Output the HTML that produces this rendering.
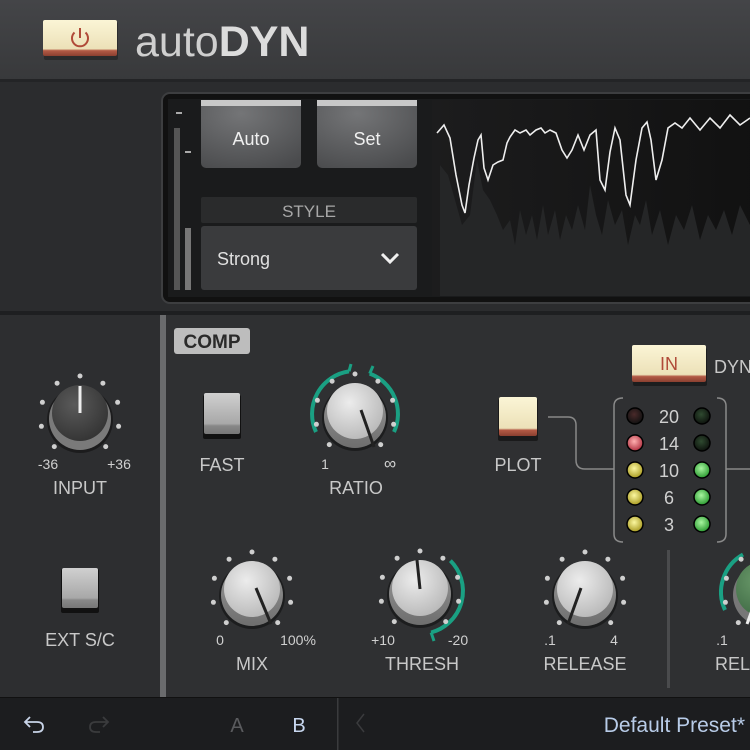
<!DOCTYPE html>
<html><head><meta charset="utf-8"><style>
html,body{margin:0;padding:0;width:750px;height:750px;overflow:hidden;background:#2e2f31}
svg{display:block}
text{font-family:"Liberation Sans",sans-serif}
</style></head><body>
<svg width="750" height="750" viewBox="0 0 750 750" xmlns="http://www.w3.org/2000/svg">
<defs>
<linearGradient id="hdr" x1="0" y1="0" x2="0" y2="1"><stop offset="0" stop-color="#444548"/><stop offset="1" stop-color="#38393b"/></linearGradient>
<linearGradient id="cream" x1="0" y1="0" x2="0" y2="1"><stop offset="0" stop-color="#fbf5d6"/><stop offset="0.8" stop-color="#ece1b8"/><stop offset="0.85" stop-color="#b35a45"/><stop offset="1" stop-color="#8a4030"/></linearGradient>
<radialGradient id="btn" cx="0.4" cy="0.2" r="0.9"><stop offset="0" stop-color="#747577"/><stop offset="1" stop-color="#4a4b4d"/></radialGradient>
<linearGradient id="sq" x1="0" y1="0" x2="0" y2="1"><stop offset="0" stop-color="#d0d0d0"/><stop offset="0.75" stop-color="#a8a8a8"/><stop offset="0.8" stop-color="#888"/><stop offset="1" stop-color="#777"/></linearGradient>
<radialGradient id="cap" cx="0.4" cy="0.35" r="0.7"><stop offset="0" stop-color="#ececec"/><stop offset="1" stop-color="#b8b8b8"/></radialGradient>
<linearGradient id="skirt" x1="0" y1="0" x2="0" y2="1"><stop offset="0" stop-color="#9a9a9a"/><stop offset="1" stop-color="#6e6e6e"/></linearGradient>
<radialGradient id="dcap" cx="0.4" cy="0.35" r="0.7"><stop offset="0" stop-color="#5a5a5a"/><stop offset="1" stop-color="#333"/></radialGradient>
<radialGradient id="gcap" cx="0.4" cy="0.35" r="0.7"><stop offset="0" stop-color="#6a9a6a"/><stop offset="1" stop-color="#3f6a45"/></radialGradient>
<linearGradient id="wavebg" x1="0" y1="0" x2="1" y2="0"><stop offset="0" stop-color="#1c1c1d"/><stop offset="1" stop-color="#111"/></linearGradient>
<g id="dots" fill="#cfcfcf">
<circle cx="-25.7" cy="30.6" r="2.5"/><circle cx="-38.6" cy="10.3" r="2.5"/><circle cx="-37.6" cy="-13.7" r="2.5"/><circle cx="-22.9" cy="-32.8" r="2.5"/><circle cx="0" cy="-40" r="2.5"/><circle cx="22.9" cy="-32.8" r="2.5"/><circle cx="37.6" cy="-13.7" r="2.5"/><circle cx="38.6" cy="10.3" r="2.5"/><circle cx="25.7" cy="30.6" r="2.5"/>
</g>
<g id="knob"><circle cx="0" cy="4" r="33" fill="#111" opacity="0.6"/><circle cx="0" cy="3" r="31" fill="url(#skirt)"/><circle cx="0" cy="-3" r="28" fill="url(#cap)"/></g>
<g id="dknob"><circle cx="0" cy="4" r="33" fill="#111" opacity="0.6"/><circle cx="0" cy="3" r="31" fill="#7a7a7a"/><circle cx="0" cy="-3" r="28" fill="url(#dcap)"/></g>
<radialGradient id="ledY" cx="0.45" cy="0.4" r="0.6"><stop offset="0" stop-color="#fbf7a0"/><stop offset="1" stop-color="#a89a20"/></radialGradient>
<radialGradient id="ledG" cx="0.45" cy="0.4" r="0.6"><stop offset="0" stop-color="#a8f5a0"/><stop offset="1" stop-color="#2a9a30"/></radialGradient>
<radialGradient id="ledR" cx="0.45" cy="0.4" r="0.6"><stop offset="0" stop-color="#ffb0b0"/><stop offset="1" stop-color="#b03040"/></radialGradient>
<radialGradient id="ledOffR" cx="0.45" cy="0.4" r="0.6"><stop offset="0" stop-color="#4a2a2a"/><stop offset="1" stop-color="#111"/></radialGradient>
<radialGradient id="ledOffG" cx="0.45" cy="0.4" r="0.6"><stop offset="0" stop-color="#2f4a30"/><stop offset="1" stop-color="#0d120d"/></radialGradient>
</defs>

<rect x="0" y="0" width="750" height="80" fill="url(#hdr)"/>
<rect x="0" y="79" width="750" height="3" fill="#232426"/>
<rect x="44" y="22" width="74" height="38" rx="2" fill="#1a1a1a" opacity="0.5"/>
<rect x="43" y="20" width="74" height="36" rx="2" fill="url(#cream)"/>
<path d="M74.5 32.5 A8 8 0 1 0 85.5 32.5" fill="none" stroke="#b04a38" stroke-width="2"/>
<line x1="80" y1="28" x2="80" y2="38" stroke="#b04a38" stroke-width="2"/>
<text x="135" y="56" font-size="43" fill="#cfcfcf">auto<tspan font-weight="bold" fill="#dcdcdc">DYN</tspan></text>

<rect x="0" y="82" width="750" height="232" fill="#2b2c2e"/>
<rect x="162" y="93" width="600" height="210" rx="8" fill="#111" stroke="#3d3e40" stroke-width="2"/>
<rect x="168" y="99" width="600" height="198" fill="#1a1b1c"/>
<rect x="176" y="112" width="6" height="2" fill="#aaa"/>
<rect x="185" y="151" width="6" height="2" fill="#aaa"/>
<rect x="174" y="128" width="6" height="162" fill="#555"/>
<rect x="185" y="228" width="6" height="62" fill="#777"/>
<rect x="201" y="100" width="100" height="68" rx="5" fill="url(#btn)"/>
<rect x="201" y="100" width="100" height="6" fill="#c8c8c8"/>
<text x="251" y="145" font-size="18" fill="#f0f0f0" text-anchor="middle">Auto</text>
<rect x="317" y="100" width="100" height="68" rx="5" fill="url(#btn)"/>
<rect x="317" y="100" width="100" height="6" fill="#c8c8c8"/>
<text x="367" y="145" font-size="18" fill="#f0f0f0" text-anchor="middle">Set</text>
<rect x="201" y="197" width="216" height="26" rx="2" fill="#2a2b2c"/>
<text x="309" y="217" font-size="17" fill="#a8a8a8" text-anchor="middle">STYLE</text>
<rect x="201" y="226" width="216" height="64" rx="3" fill="#3a3b3d"/>
<text x="217" y="265" font-size="18" fill="#e0e0e0">Strong</text>
<path d="M382 254 L390 262 L398 254" fill="none" stroke="#f0f0f0" stroke-width="3"/>
<rect x="432" y="100" width="330" height="196" fill="url(#wavebg)"/>
<path d="M440 296 L440 165 L448 175 L455 200 L462 225 L470 215 L477 160 L483 190 L490 200 L497 215 L503 230 L510 220 L515 245 L520 210 L526 235 L532 215 L537 240 L543 205 L548 235 L555 210 L560 240 L566 215 L572 230 L578 205 L585 230 L590 185 L596 215 L602 235 L608 200 L615 225 L622 210 L628 245 L635 215 L640 225 L646 200 L652 235 L660 210 L668 245 L676 215 L684 230 L692 205 L700 240 L708 215 L716 230 L724 210 L732 235 L740 205 L750 225 L760 296 Z" fill="#252627"/>
<polyline points="437,133 444,125 450,138 456,175 462,205 465,213 469,185 474,158 478,140 481,135 484,168 488,180 493,165 498,162 503,160 507,143 510,137 515,130 520,133 526,130 530,135 536,130 541,128 545,133 550,130 556,133 562,150 567,158 572,150 578,135 584,150 590,135 596,130 600,180 605,190 610,152 615,128 620,140 626,195 630,205 636,160 642,128 647,122 651,140 656,180 662,160 668,128 675,123 682,128 690,118 700,130 710,118 720,128 730,115 740,125 750,118" fill="none" stroke="#eee" stroke-width="1.6"/>
<rect x="0" y="311" width="750" height="4" fill="#1e1f21"/>

<rect x="0" y="315" width="160" height="382" fill="#2d2e30"/>
<rect x="160" y="315" width="6" height="382" fill="#6a6b6d"/>
<rect x="166" y="315" width="584" height="382" fill="#2f3032"/>

<rect x="174" y="328" width="76" height="26" rx="3" fill="#bdbdbd"/>
<text x="212" y="348" font-size="19" font-weight="bold" fill="#2a2a2a" text-anchor="middle">COMP</text>

<g transform="translate(80,416)"><use href="#dots"/><use href="#dknob"/><line x1="0" y1="-3" x2="0" y2="-30" stroke="#eee" stroke-width="3"/></g>
<text x="48" y="469" font-size="14" fill="#d0d0d0" text-anchor="middle">-36</text>
<text x="119" y="469" font-size="14" fill="#d0d0d0" text-anchor="middle">+36</text>
<text x="80" y="494" font-size="18" fill="#c8c8c8" text-anchor="middle">INPUT</text>

<rect x="61" y="569" width="38" height="44" rx="2" fill="#111"/>
<rect x="62" y="568" width="36" height="40" rx="2" fill="url(#sq)"/>
<text x="80" y="646" font-size="18" fill="#c8c8c8" text-anchor="middle">EXT S/C</text>

<rect x="203" y="395" width="38" height="44" rx="2" fill="#111"/>
<rect x="204" y="393" width="36" height="41" rx="2" fill="url(#sq)"/>
<text x="222" y="471" font-size="18" fill="#c8c8c8" text-anchor="middle">FAST</text>

<g transform="translate(355,414)">
<path d="M-39 18 A43 43 0 0 1 -6 -42.6" fill="none" stroke="#1aa083" stroke-width="4"/>
<path d="M14.7 -40.4 A43 43 0 0 1 39 18" fill="none" stroke="#1aa083" stroke-width="4"/>
<line x1="-6" y1="-42.6" x2="-4" y2="-50" stroke="#1aa083" stroke-width="3"/>
<line x1="14.7" y1="-40.4" x2="18" y2="-48" stroke="#1aa083" stroke-width="3"/>
<use href="#dots"/><use href="#knob"/>
<line x1="6" y1="-4" x2="19" y2="33" stroke="#222" stroke-width="3"/></g>
<text x="325" y="469" font-size="14" fill="#d0d0d0" text-anchor="middle">1</text>
<text x="390" y="469" font-size="17" fill="#d0d0d0" text-anchor="middle">∞</text>
<text x="356" y="494" font-size="18" fill="#c8c8c8" text-anchor="middle">RATIO</text>

<rect x="498" y="399" width="40" height="42" rx="2" fill="#111" opacity="0.7"/>
<rect x="499" y="397" width="38" height="39" rx="2" fill="url(#cream)"/>
<text x="518" y="471" font-size="18" fill="#c8c8c8" text-anchor="middle">PLOT</text>
<path d="M548 417 L568 417 Q576 417 576 425 L576 460 Q576 469 585 469 L614 469" fill="none" stroke="#888" stroke-width="1.5"/>
<path d="M726 469 L750 469" fill="none" stroke="#888" stroke-width="1.5"/>

<rect x="633" y="348" width="74" height="38" rx="2" fill="#111" opacity="0.6"/>
<rect x="632" y="345" width="74" height="37" rx="2" fill="url(#cream)"/>
<text x="669" y="370" font-size="18" fill="#b04a38" text-anchor="middle">IN</text>
<text x="714" y="373" font-size="18" fill="#c8c8c8">DYN</text>

<path d="M623 398 Q614 398 614 406 L614 534 Q614 542 623 542" fill="none" stroke="#8a8a8a" stroke-width="1.5"/>
<path d="M717 398 Q726 398 726 406 L726 534 Q726 542 717 542" fill="none" stroke="#8a8a8a" stroke-width="1.5"/>
<g stroke="#000" stroke-width="1.5">
<circle cx="635" cy="416" r="8" fill="url(#ledOffR)"/>
<circle cx="635" cy="443" r="8" fill="url(#ledR)"/>
<circle cx="635" cy="470" r="8" fill="url(#ledY)"/>
<circle cx="635" cy="497" r="8" fill="url(#ledY)"/>
<circle cx="635" cy="524" r="8" fill="url(#ledY)"/>
<circle cx="702" cy="416" r="8" fill="url(#ledOffG)"/>
<circle cx="702" cy="443" r="8" fill="url(#ledOffG)"/>
<circle cx="702" cy="470" r="8" fill="url(#ledG)"/>
<circle cx="702" cy="497" r="8" fill="url(#ledG)"/>
<circle cx="702" cy="524" r="8" fill="url(#ledG)"/>
</g>
<g font-size="18" fill="#d0d0d0" text-anchor="middle">
<text x="669" y="423">20</text><text x="669" y="450">14</text><text x="669" y="477">10</text><text x="669" y="504">6</text><text x="669" y="531">3</text>
</g>
<rect x="667" y="550" width="3" height="138" fill="#4a4b4d"/>

<g transform="translate(252,592)"><use href="#dots"/><use href="#knob"/><line x1="4" y1="-4" x2="19" y2="32" stroke="#222" stroke-width="3"/></g>
<text x="220" y="645" font-size="14" fill="#d0d0d0" text-anchor="middle">0</text>
<text x="298" y="645" font-size="14" fill="#d0d0d0" text-anchor="middle">100%</text>
<text x="252" y="670" font-size="18" fill="#c8c8c8" text-anchor="middle">MIX</text>

<g transform="translate(420,591)">
<path d="M30.4 -30.4 A43 43 0 0 1 11.1 41.5" fill="none" stroke="#1aa083" stroke-width="4"/>
<line x1="11.1" y1="41.5" x2="14" y2="50" stroke="#1aa083" stroke-width="3"/>
<use href="#dots"/><use href="#knob"/><line x1="0" y1="-2" x2="-3" y2="-31" stroke="#222" stroke-width="3"/></g>
<text x="383" y="645" font-size="14" fill="#d0d0d0" text-anchor="middle">+10</text>
<text x="458" y="645" font-size="14" fill="#d0d0d0" text-anchor="middle">-20</text>
<text x="422" y="670" font-size="18" fill="#c8c8c8" text-anchor="middle">THRESH</text>

<g transform="translate(585,592)"><use href="#dots"/><use href="#knob"/><line x1="-4" y1="-4" x2="-17" y2="32" stroke="#222" stroke-width="3"/></g>
<text x="550" y="645" font-size="14" fill="#d0d0d0" text-anchor="middle">.1</text>
<text x="614" y="645" font-size="14" fill="#d0d0d0" text-anchor="middle">4</text>
<text x="585" y="670" font-size="18" fill="#c8c8c8" text-anchor="middle">RELEASE</text>

<g transform="translate(764,592)">
<path d="M-39 18 A43 43 0 0 1 -21 -37.5" fill="none" stroke="#1aa083" stroke-width="4"/>
<use href="#dots"/><circle cx="0" cy="3" r="31" fill="#777"/><circle cx="0" cy="-3" r="28" fill="url(#gcap)"/>
<line x1="-4" y1="-4" x2="-17" y2="32" stroke="#eee" stroke-width="3"/></g>
<text x="722" y="645" font-size="14" fill="#d0d0d0" text-anchor="middle">.1</text>
<text x="715" y="670" font-size="18" fill="#c8c8c8">REL</text>

<rect x="0" y="697" width="750" height="53" fill="#1c1d1f"/>
<rect x="0" y="697" width="750" height="1" fill="#111"/>
<rect x="337" y="698" width="1.5" height="52" fill="#3a3b3d"/>
<path d="M30 717 L25 722 L30 727 M25 722 L37 722 Q43 722 43 727 Q43 732 37 732 L33 732" fill="none" stroke="#c8d4e8" stroke-width="1.8"/>
<path d="M103 717 L108 722 L103 727 M108 722 L96 722 Q90 722 90 727 Q90 732 96 732 L100 732" fill="none" stroke="#3a3b3d" stroke-width="1.8"/>
<text x="237" y="732" font-size="20" fill="#5a5b5e" text-anchor="middle">A</text>
<text x="299" y="732" font-size="20" fill="#c8d8f0" text-anchor="middle">B</text>
<path d="M364 714 L357 723 L364 732" fill="none" stroke="#3a3b3d" stroke-width="1.5"/>
<text x="745" y="732" font-size="21" fill="#b8cce8" text-anchor="end">Default Preset*</text>
</svg>
</body></html>
